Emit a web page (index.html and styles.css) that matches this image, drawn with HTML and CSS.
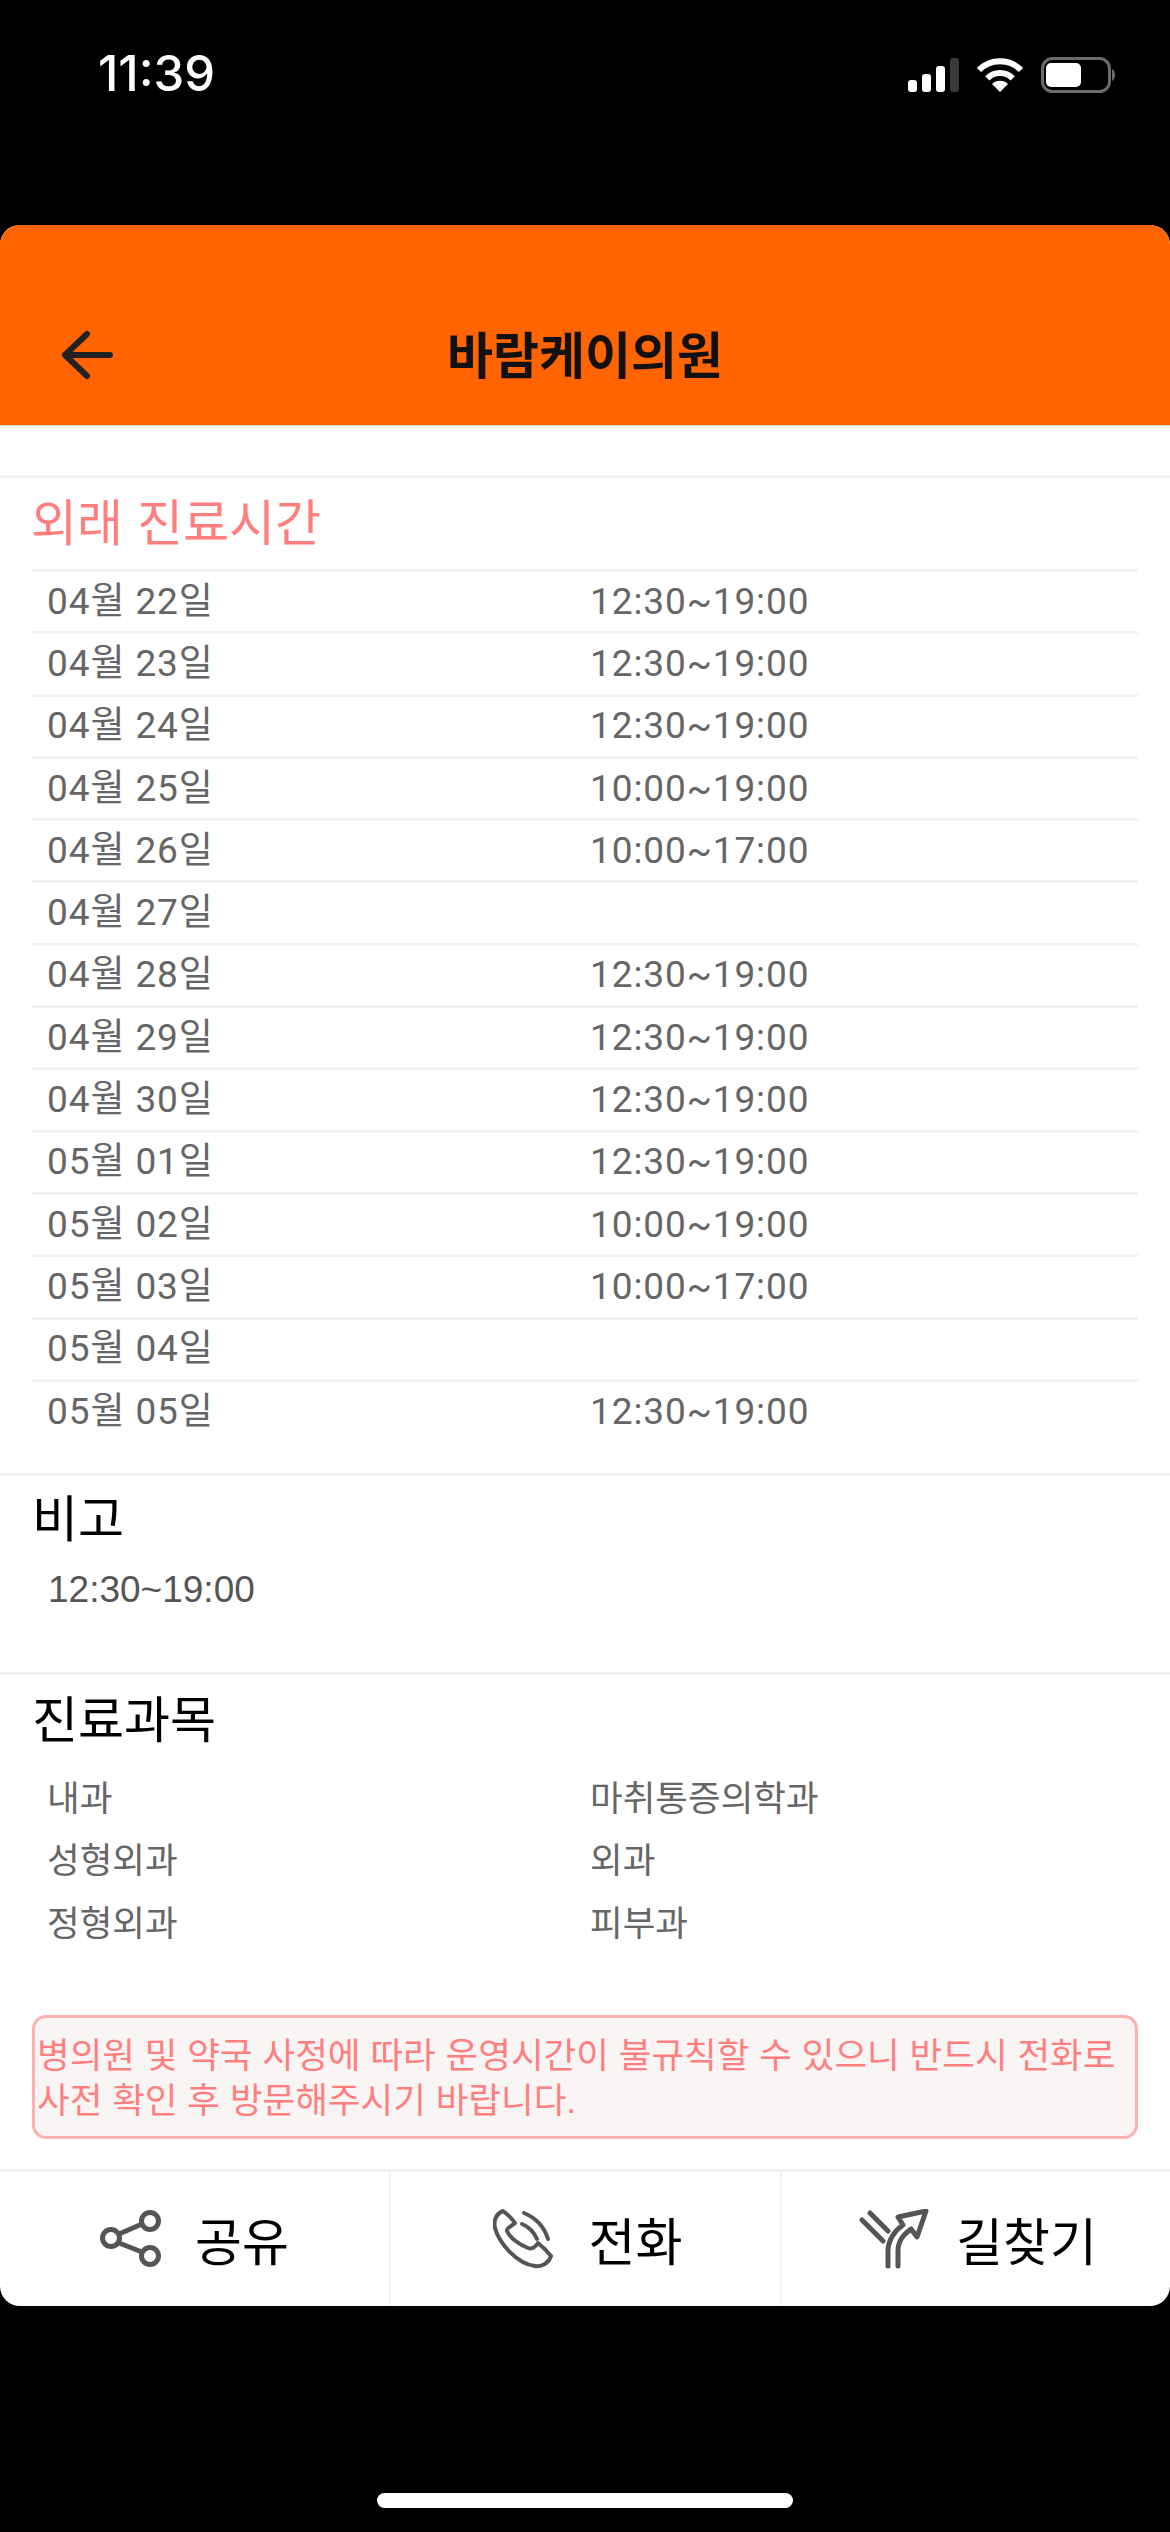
FILE: index.html
```html
<!DOCTYPE html>
<html lang="ko">
<head>
<meta charset="utf-8">
<title>바람케이의원</title>
<link rel="stylesheet" href="styles.css">
</head>
<body>
<div class="status">
  <span class="time">11:39</span>
  <div class="status-icons">
    <svg width="51" height="34" viewBox="0 0 51 34"><rect x="0" y="22" width="9" height="12" rx="3" fill="#fff"/><rect x="14" y="16" width="9" height="18" rx="3" fill="#fff"/><rect x="28" y="8" width="9" height="26" rx="3" fill="#fff"/><rect x="42" y="0" width="9" height="34" rx="3" fill="#3a3a3a"/></svg>
    <svg width="48" height="34" viewBox="0 0 48 34"><path d="M3 12 A29.7 29.7 0 0 1 45 12" fill="none" stroke="#fff" stroke-width="6"/><path d="M11.3 20.3 A18 18 0 0 1 36.7 20.3" fill="none" stroke="#fff" stroke-width="6"/><path d="M24 34 L16 26 A11.3 11.3 0 0 1 32 26 Z" fill="#fff"/></svg>
    <svg class="ic-batt" width="75" height="36" viewBox="0 0 75 36"><rect x="1.5" y="1.5" width="67" height="33" rx="10" fill="none" stroke="#6b6b6b" stroke-width="3"/><rect x="5" y="6" width="35" height="24" rx="5" fill="#fff"/><path d="M71 12 C75 14 75 22 71 24 Z" fill="#6b6b6b"/></svg>
  </div>
</div>
<main class="card">
  <header class="hdr">
    <svg class="back" width="54" height="50" viewBox="0 0 54 50"><path d="M27 4 L5 25 L27 46 M5 25 H50" fill="none" stroke="#222" stroke-width="6" stroke-linecap="round" stroke-linejoin="round"/></svg>
    <h1 class="title">바람케이의원</h1>
  </header>
  <div class="gap"></div>
  <section class="hours">
    <h2 class="h-pink">외래 진료시간</h2>
    <div class="table">
      <div class="row"><span>04월 22일</span><span>12:30~19:00</span></div>
      <div class="row"><span>04월 23일</span><span>12:30~19:00</span></div>
      <div class="row"><span>04월 24일</span><span>12:30~19:00</span></div>
      <div class="row"><span>04월 25일</span><span>10:00~19:00</span></div>
      <div class="row"><span>04월 26일</span><span>10:00~17:00</span></div>
      <div class="row"><span>04월 27일</span><span></span></div>
      <div class="row"><span>04월 28일</span><span>12:30~19:00</span></div>
      <div class="row"><span>04월 29일</span><span>12:30~19:00</span></div>
      <div class="row"><span>04월 30일</span><span>12:30~19:00</span></div>
      <div class="row"><span>05월 01일</span><span>12:30~19:00</span></div>
      <div class="row"><span>05월 02일</span><span>10:00~19:00</span></div>
      <div class="row"><span>05월 03일</span><span>10:00~17:00</span></div>
      <div class="row"><span>05월 04일</span><span></span></div>
      <div class="row"><span>05월 05일</span><span>12:30~19:00</span></div>
    </div>
  </section>
  <section class="note">
    <h2 class="h-black">비고</h2>
    <p class="note-text">12:30~19:00</p>
  </section>
  <section class="depts">
    <h2 class="h-black">진료과목</h2>
    <div class="dept-grid">
      <span>내과</span><span>마취통증의학과</span>
      <span>성형외과</span><span>외과</span>
      <span>정형외과</span><span>피부과</span>
    </div>
  </section>
  <div class="warn">병의원 및 약국 사정에 따라 운영시간이 불규칙할 수 있으니 반드시 전화로 사전 확인 후 방문해주시기 바랍니다.</div>
  <nav class="actions">
    <div class="act act-share"><svg width="62" height="58" viewBox="0 0 62 58"><g fill="none" stroke="#555" stroke-width="5"><circle cx="11" cy="28" r="8.5"/><circle cx="50" cy="11" r="8.5"/><circle cx="50" cy="46" r="8.5"/><path d="M19 24 L42 14 M19 33 L42 42"/></g></svg><span>공유</span></div>
    <div class="act act-call"><svg width="60" height="60" viewBox="0 0 60 60"><g fill="none" stroke="#555" stroke-width="4" stroke-linecap="round" stroke-linejoin="round"><path d="M10 2 C4 4 0 11 2 19 C6 34 24 55 42 57 C49 58 56 54 58 47 C54 42 50 38 45 34 C43 37 40 41 35 39 C27 36 17 29 14 22 C13 19 19 17 22 14 C19 9 14 5 10 2 Z"/><path d="M31 4 C43 9 51 17 55 30"/><path d="M29 15 C36 18 41 23 44 30"/></g></svg><span>전화</span></div>
    <div class="act act-route"><svg width="70" height="60" viewBox="0 0 70 60"><g fill="none" stroke="#555" stroke-width="5" stroke-linecap="round" stroke-linejoin="round"><path d="M3 11 L24 32 M11 4 L29 22"/><path d="M29 57 V42 C29 32 35 22 44 16 L39 8 L67 2 L58 28 L52 20 C44 26 39 32 39 42 V57"/></g></svg><span>길찾기</span></div>
  </nav>
</main>
<div class="home-area"><div class="home"></div></div>
</body>
</html>
```
FILE: styles.css
```css
* { box-sizing: border-box; }
html, body { margin: 0; padding: 0; }
body {
  width: 1170px;
  height: 2532px;
  background: #000;
  font-family: "Liberation Sans", "Noto Sans CJK KR", sans-serif;
  display: flex;
  flex-direction: column;
  overflow: hidden;
}
.status {
  height: 225px;
  padding: 46px 54px 0 98px;
  display: flex;
  justify-content: space-between;
  align-items: flex-start;
  color: #fff;
}
.time { font-size: 49px; line-height: 56px; font-weight: 500; font-family: Inter, sans-serif; }
.status-icons { display: flex; gap: 17px; margin-top: 11px; align-items: center; }
.card {
  height: 2081px;
  background: #fff;
  border-radius: 20px;
  overflow: hidden;
  display: flex;
  flex-direction: column;
}
.hdr {
  height: 201px;
  background: #ff6400;
  border-bottom: 1px solid #ddd;
  display: flex;
  justify-content: center;
  align-items: flex-end;
  position: relative;
  padding-bottom: 38px;
}
.back { position: absolute; left: 60px; top: 105px; }
.title { margin: 0; font-size: 50px; line-height: 60px; font-weight: 700; color: #111; }
.gap { height: 52px; border-bottom: 3px solid #f2f2f2; }
.hours { padding: 0 32px; height: 995px; }
.h-pink { margin: 0 0 0 -1px; font-size: 50px; line-height: 60px; padding-top: 16px; height: 91px; font-weight: 400; color: #ff7f7f; }
.row {
  height: 62.3px;
  border-top: 3px solid #f2f2f2;
  display: grid;
  grid-template-columns: 543px 1fr;
  padding-left: 15px;
  align-items: center;
  font-family: Roboto, "Noto Sans CJK KR", sans-serif;
  font-size: 37px;
  letter-spacing: 0.9px;
  line-height: 46px;
  color: #666;
}
.note { height: 199px; border-top: 3px solid #f2f2f2; padding: 14px 32px 0; }
.h-black { margin: 0; font-size: 50px; line-height: 60px; font-weight: 400; color: #000; }
.note-text { margin: 15px 0 0 16px; font-size: 37px; line-height: 50px; color: #555; }
.depts { height: 343px; border-top: 3px solid #f2f2f2; padding: 16px 32px 0; }
.dept-grid {
  margin-top: 17px;
  display: grid;
  grid-template-columns: 543px 1fr;
  grid-auto-rows: 62.3px;
  padding-left: 15px;
  align-items: center;
  font-size: 35.5px;
  line-height: 46px;
  color: #666;
}
.warn {
  margin: 0 32px;
  height: 124px;
  flex: none;
  border: 3px solid #ffb0b0;
  border-radius: 14px;
  background: #faf5f5;
  color: #ff7f7f;
  font-size: 35.5px;
  line-height: 45px;
  padding: 16px 0 0 2px;
}
.actions {
  margin-top: 30px;
  flex: 1;
  border-top: 3px solid #f2f2f2;
  display: grid;
  grid-template-columns: 389px 391px 1fr;
}
.act {
  display: flex;
  align-items: center;
  justify-content: center;
  font-size: 51px;
  color: #000;
  border-left: 2px solid #f2f2f2;
}
.act-share { gap: 33px; border-left: 0; }
.act-call { gap: 36px; padding-left: 4px; }
.act-route { gap: 27px; padding-left: 4px; }
.home-area { flex: 1; display: flex; justify-content: center; align-items: flex-end; padding-bottom: 24px; }
.home { width: 416px; height: 15px; background: #fff; border-radius: 8px; }
```
